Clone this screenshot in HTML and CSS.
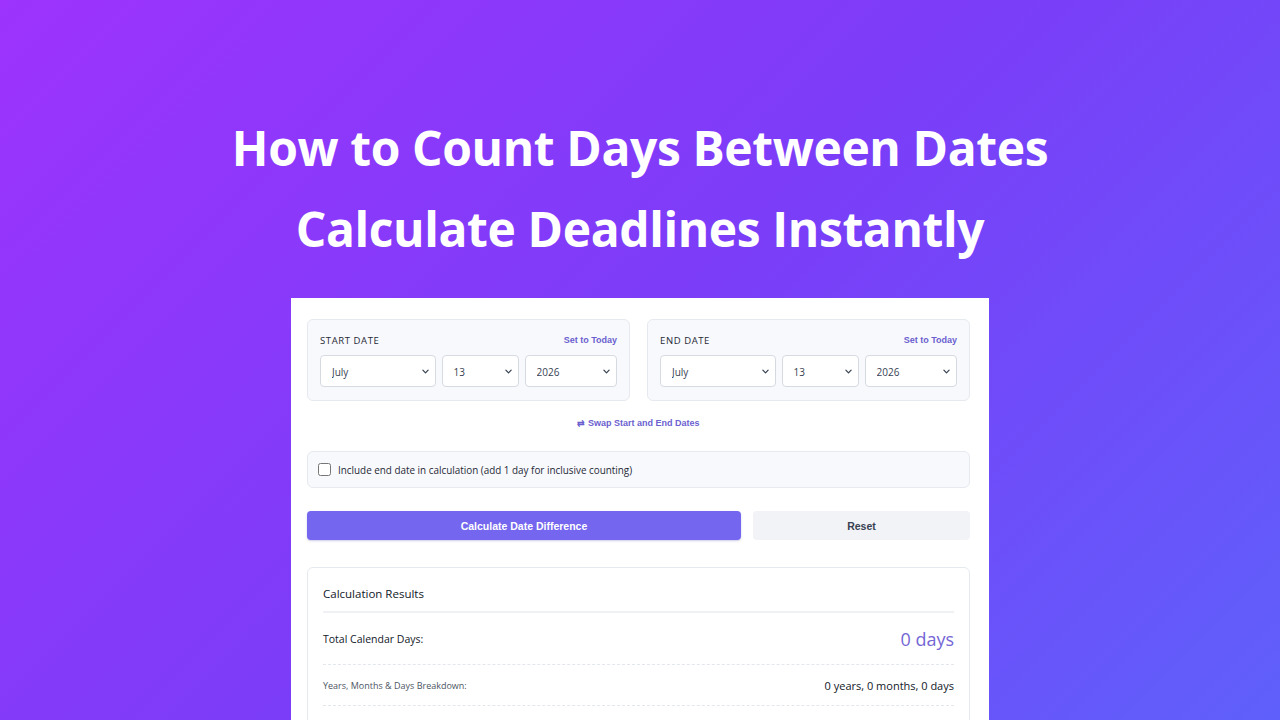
FILE: index.html
```html
<!DOCTYPE html>
<html lang="en">
<head>
<meta charset="utf-8">
<title>How to Count Days Between Dates</title>
<link rel="stylesheet" href="styles.css">
</head>
<body>
<div class="hero">
  <h1 class="title"><span>How to Count Days Between Dates</span><span>Calculate Deadlines Instantly</span></h1>
  <div class="card">
    <div class="dates">
      <div class="panel">
        <div class="panel-head">
          <span class="label">START DATE</span>
          <button class="link-btn">Set to Today</button>
        </div>
        <div class="selects">
          <div class="sel-wrap"><select class="sel"><option>July</option></select><svg class="chev" viewBox="0 0 8 5"><path d="M1 1l3 3 3-3" fill="none" stroke="#374151" stroke-width="1.4" stroke-linecap="round" stroke-linejoin="round"/></svg></div>
          <div class="sel-wrap"><select class="sel"><option>13</option></select><svg class="chev" viewBox="0 0 8 5"><path d="M1 1l3 3 3-3" fill="none" stroke="#374151" stroke-width="1.4" stroke-linecap="round" stroke-linejoin="round"/></svg></div>
          <div class="sel-wrap"><select class="sel"><option>2026</option></select><svg class="chev" viewBox="0 0 8 5"><path d="M1 1l3 3 3-3" fill="none" stroke="#374151" stroke-width="1.4" stroke-linecap="round" stroke-linejoin="round"/></svg></div>
        </div>
      </div>
      <div class="panel">
        <div class="panel-head">
          <span class="label">END DATE</span>
          <button class="link-btn">Set to Today</button>
        </div>
        <div class="selects">
          <div class="sel-wrap"><select class="sel"><option>July</option></select><svg class="chev" viewBox="0 0 8 5"><path d="M1 1l3 3 3-3" fill="none" stroke="#374151" stroke-width="1.4" stroke-linecap="round" stroke-linejoin="round"/></svg></div>
          <div class="sel-wrap"><select class="sel"><option>13</option></select><svg class="chev" viewBox="0 0 8 5"><path d="M1 1l3 3 3-3" fill="none" stroke="#374151" stroke-width="1.4" stroke-linecap="round" stroke-linejoin="round"/></svg></div>
          <div class="sel-wrap"><select class="sel"><option>2026</option></select><svg class="chev" viewBox="0 0 8 5"><path d="M1 1l3 3 3-3" fill="none" stroke="#374151" stroke-width="1.4" stroke-linecap="round" stroke-linejoin="round"/></svg></div>
        </div>
      </div>
    </div>
    <div class="swap-row"><button class="link-btn swap">⇄ Swap Start and End Dates</button></div>
    <label class="check-row"><input type="checkbox" class="check"><span>Include end date in calculation (add 1 day for inclusive counting)</span></label>
    <div class="actions">
      <button class="btn primary">Calculate Date Difference</button>
      <button class="btn secondary">Reset</button>
    </div>
    <div class="results">
      <div class="results-head">Calculation Results</div>
      <div class="row main">
        <span class="row-label">Total Calendar Days:</span>
        <span class="row-value big">0 days</span>
      </div>
      <div class="row">
        <span class="row-label small">Years, Months &amp; Days Breakdown:</span>
        <span class="row-value">0 years, 0 months, 0 days</span>
      </div>
    </div>
  </div>
</div>
</body>
</html>
```
FILE: styles.css
```css
* { box-sizing: border-box; }
html, body { margin: 0; padding: 0; }
body {
  width: 1280px;
  height: 720px;
  overflow: hidden;
  background: linear-gradient(135deg, #9d33fd 0%, #7b3df8 50%, #5f60fb 100%);
  font-family: "Open Sans", "Noto Sans", sans-serif;
  color: #111827;
}
.hero {
  display: flex;
  flex-direction: column;
  align-items: center;
}
.title {
  margin: 0;
  padding-top: 107px;
  display: flex;
  flex-direction: column;
  align-items: center;
  color: #ffffff;
  font-family: "Open Sans", "Noto Sans", sans-serif;
  font-weight: 700;
  font-size: 48px;
  line-height: 81px;
  letter-spacing: -0.4px;
}
.card {
  margin-top: 29px;
  width: 698px;
  background: #ffffff;
  padding: 21px 19px 0 16px;
  height: 500px;
}
.dates {
  display: grid;
  grid-template-columns: 1fr 1fr;
  gap: 17px;
}
.panel {
  background: #f8f9fc;
  border: 1px solid #e6e9ef;
  border-radius: 6px;
  padding: 13px 12px 13px;
}
.panel-head {
  display: flex;
  justify-content: space-between;
  align-items: center;
  height: 14px;
}
.label {
  font-size: 9.5px;
  letter-spacing: 0.6px;
  color: #1f2937;
  font-weight: 500;
}
.link-btn {
  background: none;
  border: 0;
  padding: 0;
  font-family: "Liberation Sans", Arial, sans-serif;
  font-weight: 700;
  font-size: 9px;
  color: #6b5fd0;
  cursor: pointer;
}
.selects {
  margin-top: 8px;
  display: grid;
  grid-template-columns: 1.5fr 1fr 1.2fr;
  gap: 6px;
}
.sel-wrap {
  position: relative;
  min-width: 0;
}
.sel {
  -webkit-appearance: none;
  appearance: none;
  width: 100%;
  height: 32px;
  border: 1px solid #d6dae1;
  border-radius: 4px;
  background: #ffffff;
  padding: 1px 8px 0 11px;
  font-family: "Open Sans", "Noto Sans", sans-serif;
  font-size: 10px;
  color: #374151;
}
.chev {
  position: absolute;
  right: 7px;
  top: 14px;
  width: 7px;
  height: 5px;
  pointer-events: none;
}
.swap-row {
  margin-top: 16px;
  display: flex;
  justify-content: center;
  height: 12px;
  align-items: center;
}
.swap { font-size: 9px; }
.check-row {
  margin-top: 22px;
  display: flex;
  align-items: center;
  gap: 7px;
  background: #f8f9fc;
  border: 1px solid #e6e9ef;
  border-radius: 6px;
  padding: 0 10px;
  height: 37px;
  font-size: 9.9px;
  color: #1f2937;
}
.check {
  margin: 0;
  width: 13px;
  height: 13px;
}
.actions {
  margin-top: 23px;
  display: grid;
  grid-template-columns: 2fr 1fr;
  gap: 12px;
}
.btn {
  height: 29px;
  border: 0;
  border-radius: 4px;
  font-family: "Liberation Sans", Arial, sans-serif;
  font-weight: 700;
  font-size: 10.5px;
}
.primary {
  background: #7466ee;
  color: #ffffff;
  box-shadow: 0 1px 2px rgba(60, 50, 160, 0.25);
}
.secondary {
  background: #f1f3f6;
  color: #374151;
}
.results {
  margin-top: 27px;
  border: 1px solid #e6e9ef;
  border-radius: 6px;
  padding: 17px 15px 60px;
}
.results-head {
  font-size: 11.5px;
  line-height: 18px;
  padding-bottom: 8px;
  border-bottom: 2px solid #eff1f4;
  color: #111827;
}
.row {
  display: flex;
  justify-content: space-between;
  align-items: center;
  height: 41px;
  border-bottom: 1px dashed #e3e6eb;
}
.row.main { height: 52px; }
.row-label { font-size: 10.5px; color: #111827; }
.row-label.small { font-size: 9px; color: #4b5563; }
.row-value { font-size: 11px; color: #111827; }
.row-value.big { font-size: 18px; color: #7466d6; font-weight: 500; }
```
